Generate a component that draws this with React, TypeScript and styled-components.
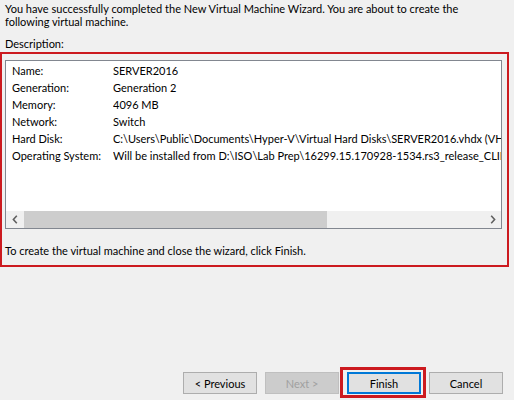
import React from "react";
import styled, { createGlobalStyle } from "styled-components";

const Global = createGlobalStyle`
  html, body { margin: 0; padding: 0; background: #f0f0f0; }
  body { font-family: Lato, "Noto Sans", sans-serif; font-size: 11px; color: #000; }
`;

const Page = styled.div`
  width: 514px;
  height: 400px;
  background: #f0f0f0;
  display: flex;
  flex-direction: column;
  overflow: hidden;
  box-sizing: border-box;
`;

const Text = styled.p<{ $top?: number; $flush?: boolean }>`
  margin: ${(p) => p.$top ?? 0}px 0 0;
  padding: ${(p) => (p.$flush ? "0" : "0 5px")};
  line-height: 13px;
  white-space: nowrap;
`;

const Highlight = styled.section`
  margin-top: 2px;
  width: 509px;
  box-sizing: border-box;
  border: 2px solid #cc1a1f;
  padding: 6px 5px 8px 3px;
  display: flex;
  flex-direction: column;
`;

const ListBox = styled.div`
  height: 169px;
  box-sizing: border-box;
  border: 1px solid #828790;
  background: #fff;
  display: flex;
  flex-direction: column;
  overflow: hidden;
`;

const Rows = styled.div`
  flex: 1;
  padding: 1px 0 0 6px;
  overflow: hidden;
`;

const Row = styled.div`
  display: grid;
  grid-template-columns: 101px 1fr;
  height: 17px;
  line-height: 17px;
  white-space: nowrap;
`;

const Cell = styled.span`
  overflow: hidden;
`;

const HScroll = styled.div`
  height: 17px;
  display: flex;
  background: #f0f0f0;
`;

const ArrowBtn = styled.div`
  width: 17px;
  display: flex;
  align-items: center;
  justify-content: center;
  flex: none;
`;

const Track = styled.div`
  flex: 1;
  display: flex;
  align-items: stretch;
  padding: 0 1px;
`;

const Thumb = styled.div`
  background: #cdcdcd;
`;

const Footer = styled.div`
  margin-top: auto;
  padding: 0 11px 6px 0;
  display: flex;
  justify-content: flex-end;
  gap: 8px;
`;

const Button = styled.button<{ $variant?: "default" | "disabled" }>`
  width: 74px;
  height: 22px;
  box-sizing: border-box;
  font-family: inherit;
  font-size: 11px;
  padding: 0;
  background: ${(p) => (p.$variant === "disabled" ? "#cccccc" : "#e1e1e1")};
  border: ${(p) =>
    p.$variant === "default" ? "2px solid #0078d7" : p.$variant === "disabled" ? "1px solid #bfbfbf" : "1px solid #adadad"};
  color: ${(p) => (p.$variant === "disabled" ? "#a0a0a0" : "#000")};
`;

const FinishWrap = styled.div`
  position: relative;
  display: flex;
`;

const FinishMark = styled.div`
  position: absolute;
  left: -7px;
  right: -5px;
  top: -5px;
  bottom: -4px;
  border: 3px solid #cc1a1f;
  pointer-events: none;
`;

const Chevron = ({ dir }: { dir: "left" | "right" }) => (
  <svg width="6" height="9" viewBox="0 0 6 9">
    <path
      d={dir === "left" ? "M4.8 0.8 L1.4 4.5 L4.8 8.2" : "M1.2 0.8 L4.6 4.5 L1.2 8.2"}
      fill="none"
      stroke="#606060"
      strokeWidth="1.6"
    />
  </svg>
);

const rows: [string, string][] = [
  ["Name:", "SERVER2016"],
  ["Generation:", "Generation 2"],
  ["Memory:", "4096 MB"],
  ["Network:", "Switch"],
  ["Hard Disk:", "C:\\Users\\Public\\Documents\\Hyper-V\\Virtual Hard Disks\\SERVER2016.vhdx (VHDX, dynamically expanding)"],
  ["Operating System:", "Will be installed from D:\\ISO\\Lab Prep\\16299.15.170928-1534.rs3_release_CLIENTCONSUMER_OEMRET_x64FRE_en-us.iso"],
];

export default function App() {
  return (
    <Page>
      <Global />
      <Text $top={2}>
        You have successfully completed the New Virtual Machine Wizard. You are about to create the
        <br />
        following virtual machine.
      </Text>
      <Text $top={9}>Description:</Text>
      <Highlight>
        <ListBox>
          <Rows>
            {rows.map(([k, v]) => (
              <Row key={k}>
                <Cell>{k}</Cell>
                <Cell>{v}</Cell>
              </Row>
            ))}
          </Rows>
          <HScroll>
            <ArrowBtn>
              <Chevron dir="left" />
            </ArrowBtn>
            <Track>
              <Thumb style={{ width: "66%" }} />
            </Track>
            <ArrowBtn>
              <Chevron dir="right" />
            </ArrowBtn>
          </HScroll>
        </ListBox>
        <Text $top={15} $flush>
          To create the virtual machine and close the wizard, click Finish.
        </Text>
      </Highlight>
      <Footer>
        <Button>&lt; Previous</Button>
        <Button $variant="disabled" disabled>
          Next &gt;
        </Button>
        <FinishWrap>
          <Button $variant="default">Finish</Button>
          <FinishMark />
        </FinishWrap>
        <Button>Cancel</Button>
      </Footer>
    </Page>
  );
}
